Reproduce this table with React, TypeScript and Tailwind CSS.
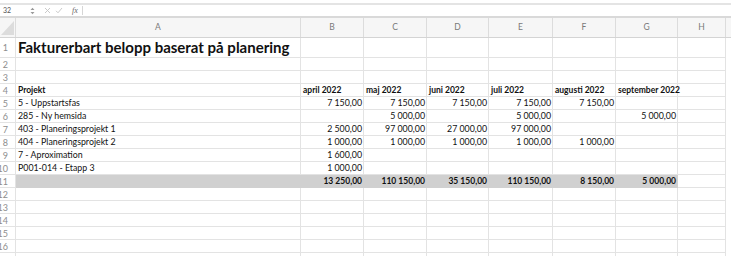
const font = { fontFamily: 'Lato, "Open Sans", sans-serif' }

const widths = [285, 63, 63, 62, 64, 63, 62, 48]
const letters = ['A', 'B', 'C', 'D', 'E', 'F', 'G', 'H']

type Row = { n: number; cells: string[]; kind?: 'title' | 'head' | 'total' }

const rows: Row[] = [
  { n: 1, cells: ['Fakturerbart belopp baserat på planering'], kind: 'title' },
  { n: 2, cells: [] },
  { n: 3, cells: [] },
  {
    n: 4,
    kind: 'head',
    cells: ['Projekt', 'april 2022', 'maj 2022', 'juni 2022', 'juli 2022', 'augusti 2022', 'september 2022'],
  },
  { n: 5, cells: ['5 - Uppstartsfas', '7 150,00', '7 150,00', '7 150,00', '7 150,00', '7 150,00'] },
  { n: 6, cells: ['285 - Ny hemsida', '', '5 000,00', '', '5 000,00', '', '5 000,00'] },
  { n: 7, cells: ['403 - Planeringsprojekt 1', '2 500,00', '97 000,00', '27 000,00', '97 000,00'] },
  { n: 8, cells: ['404 - Planeringsprojekt 2', '1 000,00', '1 000,00', '1 000,00', '1 000,00', '1 000,00'] },
  { n: 9, cells: ['7 - Aproximation', '1 600,00'] },
  { n: 10, cells: ['P001-014 - Etapp 3', '1 000,00'] },
  {
    n: 11,
    kind: 'total',
    cells: ['', '13 250,00', '110 150,00', '35 150,00', '110 150,00', '8 150,00', '5 000,00'],
  },
  { n: 12, cells: [] },
  { n: 13, cells: [] },
  { n: 14, cells: [] },
  { n: 15, cells: [] },
  { n: 16, cells: [] },
]

function FormulaBar() {
  return (
    <div className="bg-white">
      <div className="h-[3px]" />
      <div className="h-[2px] bg-[#e4e4e4]" />
      <div className="flex h-[13px] items-center border-b-2 border-[#d9d9d9] text-[#555]">
        <span className="ml-[3px] w-[22px] text-[7px] leading-none">32</span>
        <svg width="5" height="8" viewBox="0 0 5 8" className="ml-[5px]">
          <path d="M0.5 3 L2.5 0.8 L4.5 3 Z M0.5 5 L2.5 7.2 L4.5 5 Z" fill="#999" />
        </svg>
        <svg width="7" height="7" viewBox="0 0 7 7" className="ml-[9px]">
          <path d="M1 1 L6 6 M6 1 L1 6" stroke="#c4c4c4" strokeWidth="0.9" />
        </svg>
        <svg width="8" height="7" viewBox="0 0 8 7" className="ml-[4px]">
          <path d="M1 3.8 L3 5.8 L7 1" stroke="#c4c4c4" strokeWidth="0.9" fill="none" />
        </svg>
        <span
          className="ml-[9px] text-[8px] italic leading-none text-[#666]"
          style={{ fontFamily: '"Liberation Serif", serif' }}
        >
          fx
        </span>
        <div className="ml-[4px] h-[9px] w-px bg-[#d6d6d6]" />
      </div>
    </div>
  )
}

function ColumnHeader() {
  return (
    <div className="flex h-[20px] border-b border-[#d4d4d4] bg-[#f6f6f6]">
      <div className="relative w-[16px] shrink-0 border-r border-[#dcdcdc]">
        <svg width="15" height="19" viewBox="0 0 15 19" className="absolute left-0 top-0">
          <path d="M14 3 L14 17 L1 17 Z" fill="#dcdcdc" />
        </svg>
      </div>
      {letters.map((l, i) => (
        <div
          key={l}
          style={{ width: widths[i] }}
          className="flex shrink-0 items-center justify-center border-r border-[#dcdcdc] text-[8.5px] text-[#7a7a7a]"
        >
          {l}
        </div>
      ))}
    </div>
  )
}

function SheetRow({ row }: { row: Row }) {
  const isTitle = row.kind === 'title'
  const isTotal = row.kind === 'total'
  const bold = row.kind === 'head' || isTotal
  return (
    <div className={`flex ${isTitle ? 'h-[20px]' : 'h-[13px]'}`}>
      <div className="flex w-[16px] shrink-0 items-center justify-end overflow-hidden border-r border-b border-[#e3e3e3] pr-[7px]">
        <span className="whitespace-nowrap text-[9px] leading-none text-[#8d8d8d]">{row.n}</span>
      </div>
      {widths.map((w, i) => {
        const text = row.cells[i] ?? ''
        const shaded = isTotal && i < 7
        const numeric = i > 0 && row.kind !== 'head'
        const size = isTitle ? 'text-[15px] font-bold' : bold ? 'text-[8.5px] font-bold' : 'text-[8.8px]'
        return (
          <div
            key={i}
            style={{ width: w }}
            className={`flex shrink-0 whitespace-nowrap border-r border-b ${
              shaded ? 'border-transparent bg-[#d0d0d0]' : 'border-[#e3e3e3]'
            } ${isTitle ? 'items-end pb-[2px]' : 'items-center'} ${
              numeric ? 'justify-end pr-[1px]' : 'justify-start pl-[2px]'
            } ${i === 0 || i === 6 ? 'overflow-visible' : 'overflow-hidden'} ${size} leading-none text-[#111]`}
          >
            {text}
          </div>
        )
      })}
    </div>
  )
}

export default function App() {
  return (
    <div className="h-[263px] w-[731px] overflow-hidden bg-white" style={font}>
      <FormulaBar />
      <ColumnHeader />
      {rows.map((r) => (
        <SheetRow key={r.n} row={r} />
      ))}
      <div className="flex h-[3px]">
        <div className="w-[16px] shrink-0 border-r border-[#e3e3e3]" />
        {widths.map((w, i) => (
          <div key={i} style={{ width: w }} className="shrink-0 border-r border-[#e3e3e3]" />
        ))}
      </div>
    </div>
  )
}
